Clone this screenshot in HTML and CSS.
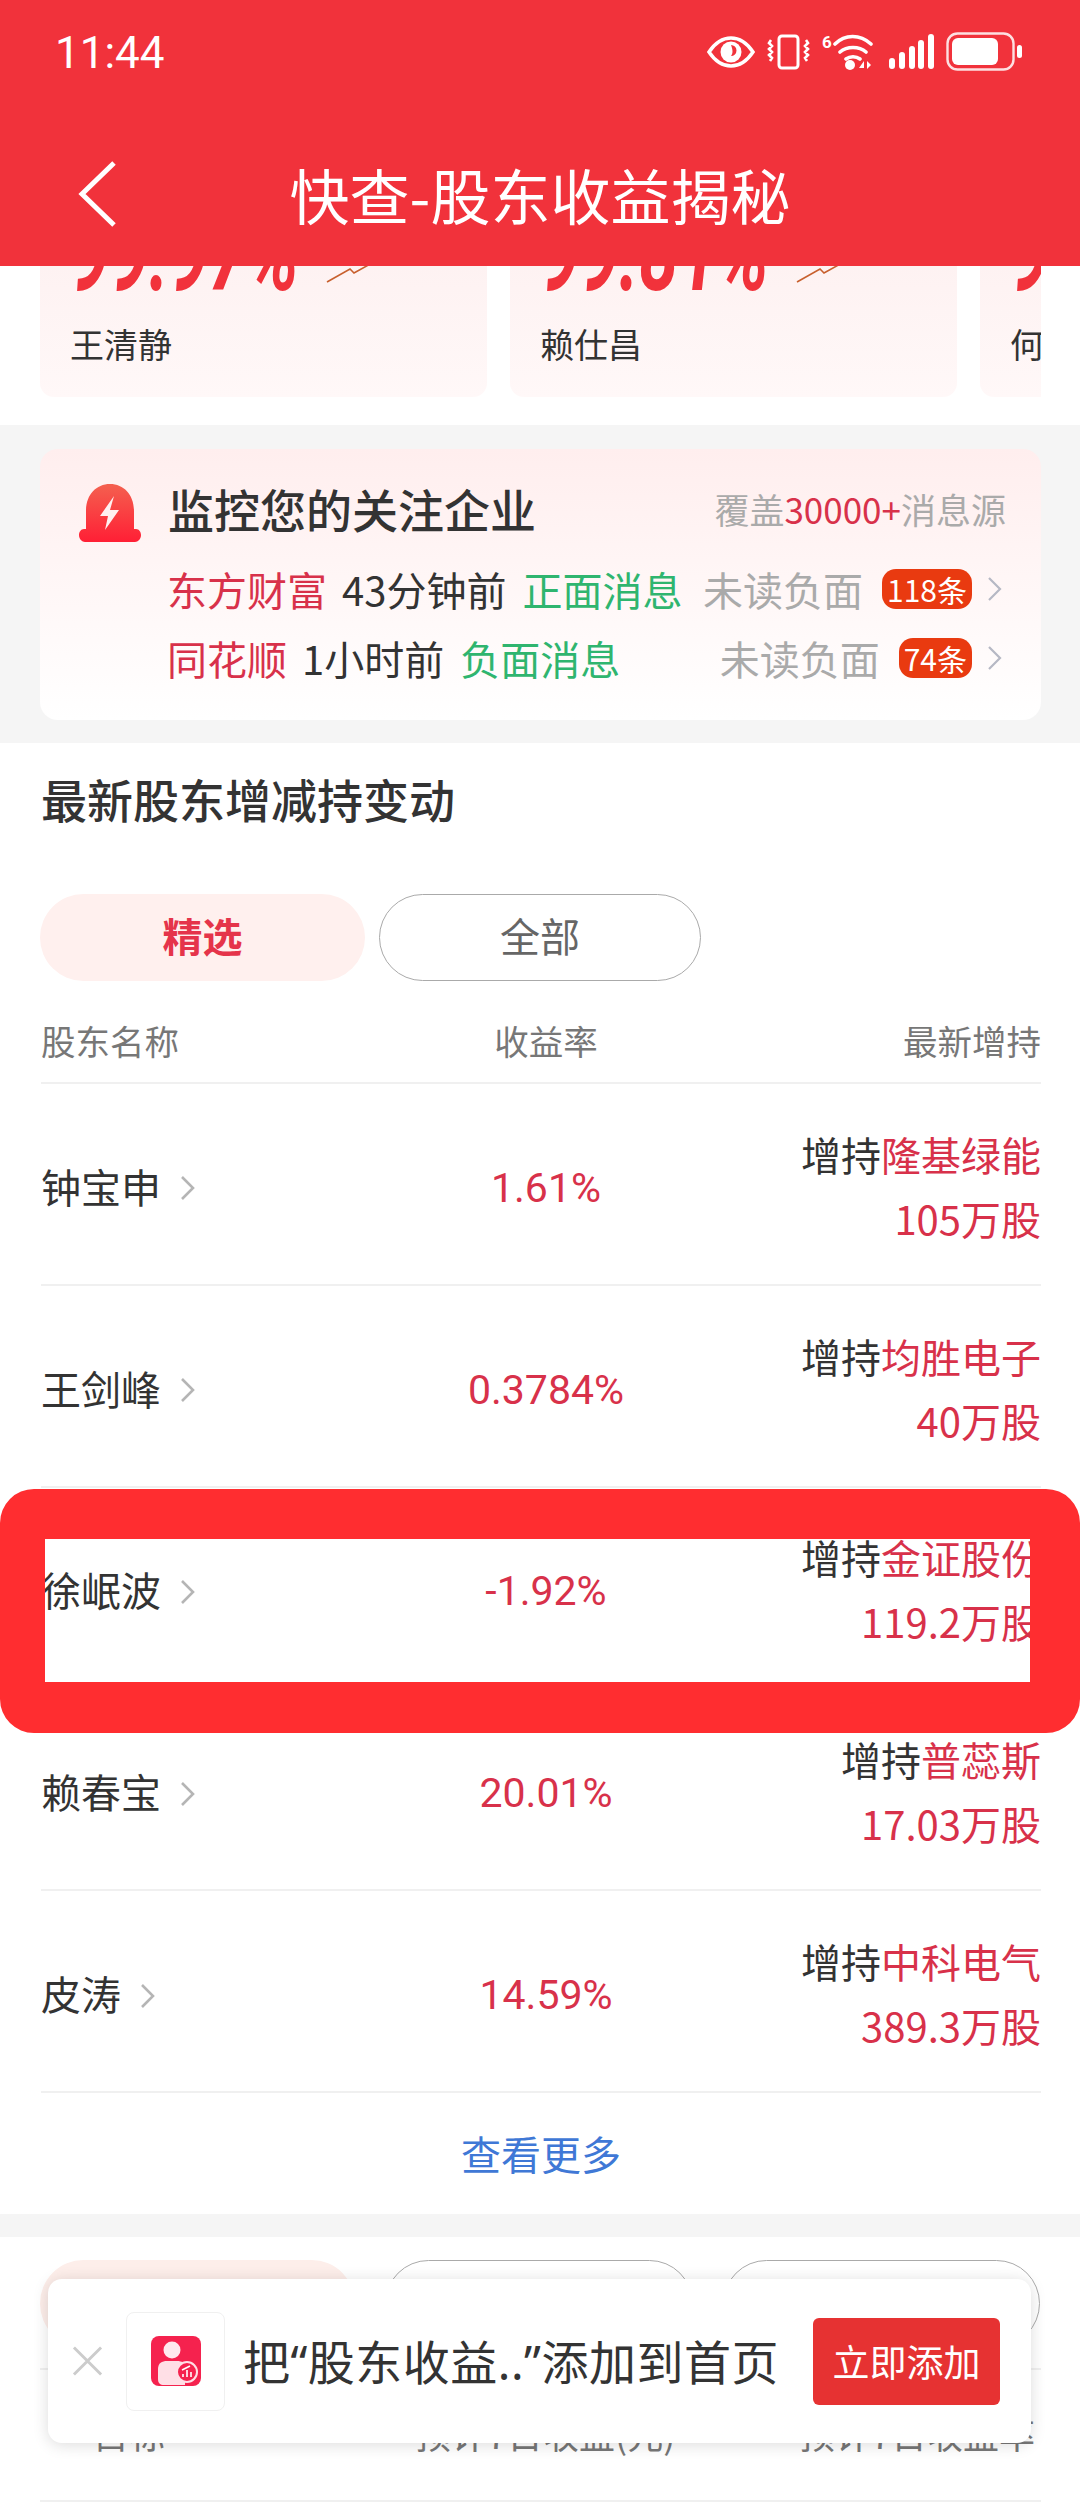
FILE: index.html
```html
<!DOCTYPE html>
<html lang="zh-CN">
<head>
<meta charset="utf-8">
<title>快查-股东收益揭秘</title>
<link rel="stylesheet" href="styles.css">
</head>
<body>
<div class="page">
  <header class="appbar">
    <div class="status">
      <span class="time">11:44</span>
      <div class="status-icons">
        <svg width="48" height="32" viewBox="0 0 48 32"><path d="M2 16C8 7 15 2 24 2s16 5 22 14c-6 9-13 14-22 14S8 25 2 16z" fill="none" stroke="#fff" stroke-width="3.5"/><circle cx="24" cy="16" r="10.5" fill="#fff"/><path d="M24 9a5.5 5.5 0 0 1 0 11c2.5-3 1.5-7 0-11z" fill="#f1323b"/></svg>
        <svg width="43" height="36" viewBox="0 0 43 36"><rect x="12" y="2" width="19" height="32" rx="3" fill="none" stroke="#fff" stroke-width="3"/><path d="M4 6L2 9l3 3-3 3 3 3-3 3 3 3-2 3M39 6l2 3-3 3 3 3-3 3 3 3-3 3 2 3" fill="none" stroke="#fff" stroke-width="2.6"/></svg>
        <svg class="wifi" width="51" height="36" viewBox="0 0 51 36"><text x="0" y="14" class="wifi-six">6</text><path d="M13 10C23 0 38 0 49 10M18 18c7-6 19-6 26 0M24 25c4-3 10-3 14 0" fill="none" stroke="#fff" stroke-width="3.6" stroke-linecap="round"/><circle cx="28" cy="31" r="5" fill="#fff"/><path d="M37 34h5v-7zM45 27v8l4-4z" fill="#fff"/></svg>
        <svg class="signal" width="45" height="35" viewBox="0 0 45 35"><rect x="0" y="24" width="6" height="11" rx="3"/><rect x="10" y="18" width="6" height="17" rx="3"/><rect x="20" y="12" width="6" height="23" rx="3"/><rect x="29" y="6" width="6" height="29" rx="3"/><rect x="39" y="0" width="6" height="35" rx="3"/></svg>
        <svg width="76" height="39" viewBox="0 0 76 39"><rect x="1.5" y="1.5" width="66" height="36" rx="10" fill="none" stroke="#fff" stroke-width="2.4" opacity=".85"/><rect x="6" y="6" width="46" height="27" rx="6" fill="#fff"/><rect x="71" y="13" width="5" height="13" rx="2.5" fill="#fff"/></svg>
      </div>
    </div>
    <div class="nav">
      <svg class="back" width="40" height="66" viewBox="0 0 40 66"><path d="M36 2L4 33l32 31" fill="none" stroke="#fff" stroke-width="5"/></svg>
      <h1 class="title">快查-股东收益揭秘</h1>
    </div>
  </header>

  <section class="top-cards">
    <div class="card-row">
      <article class="rank-card">
        <div class="rank-head"><span class="rank-num">99.97%</span><svg class="spark" width="46" height="34" viewBox="0 0 46 34"><path d="M1 33l23-13 4 4 18-10" fill="none" stroke="#c8602e" stroke-width="1.6"/></svg></div>
        <div class="rank-name">王清静</div>
      </article>
      <article class="rank-card">
        <div class="rank-head"><span class="rank-num">99.81%</span><svg class="spark" width="46" height="34" viewBox="0 0 46 34"><path d="M1 33l23-13 4 4 18-10" fill="none" stroke="#c8602e" stroke-width="1.6"/></svg></div>
        <div class="rank-name">赖仕昌</div>
      </article>
      <article class="rank-card">
        <div class="rank-head"><span class="rank-num">99.80%</span></div>
        <div class="rank-name">何雪萍</div>
      </article>
    </div>
  </section>

  <section class="band">
    <div class="monitor">
      <div class="monitor-head">
        <svg class="bell" width="62" height="60" viewBox="0 0 62 60"><defs><linearGradient id="bellfill" x1="0" y1="0" x2="0" y2="1"><stop offset="0" stop-color="#f4604f"/><stop offset="1" stop-color="#ff1f35"/></linearGradient></defs><path d="M7 46V28C7 12 17 1 31 1s24 11 24 27v18h2c3 0 5 3 5 6 0 4-3 7-6 7H6c-3 0-6-3-6-7 0-3 2-6 5-6z" fill="url(#bellfill)"/><path d="M35 13L21 33h8l-3 14 14-20h-9z" fill="#fff" opacity=".92"/></svg>
        <h2 class="monitor-title">监控您的关注企业</h2>
        <span class="monitor-src">覆盖<em>30000+</em>消息源</span>
      </div>
      <div class="feed">
        <span class="feed-co">东方财富</span><span class="feed-time">43分钟前</span><span class="feed-pos">正面消息</span>
        <span class="feed-unread">未读负面</span><span class="feed-badge">118条</span>
        <svg class="chev-sm" width="16" height="24" viewBox="0 0 16 24"><path d="M2 1l11 11L2 23" fill="none" stroke="#b6b8c4" stroke-width="2.2"/></svg>
      </div>
      <div class="feed">
        <span class="feed-co">同花顺</span><span class="feed-time">1小时前</span><span class="feed-pos">负面消息</span>
        <span class="feed-unread">未读负面</span><span class="feed-badge">74条</span>
        <svg class="chev-sm" width="16" height="24" viewBox="0 0 16 24"><path d="M2 1l11 11L2 23" fill="none" stroke="#b6b8c4" stroke-width="2.2"/></svg>
      </div>
    </div>
  </section>

  <section class="holders">
    <h2 class="section-title">最新股东增减持变动</h2>
    <div class="tabs">
      <span class="tab tab-on">精选</span>
      <span class="tab">全部</span>
    </div>
    <div class="thead">
      <span>股东名称</span><span class="c">收益率</span><span class="r">最新增持</span>
    </div>
    <div class="trow">
      <div class="name">钟宝申<svg class="chev" width="18" height="26" viewBox="0 0 18 26"><path d="M3 2l11 11L3 24" fill="none" stroke="#b5b5b5" stroke-width="2.6"/></svg></div>
      <div class="rate">1.61%</div>
      <div class="act"><div>增持<span class="red">隆基绿能</span></div><div class="red">105万股</div></div>
    </div>
    <div class="trow">
      <div class="name">王剑峰<svg class="chev" width="18" height="26" viewBox="0 0 18 26"><path d="M3 2l11 11L3 24" fill="none" stroke="#b5b5b5" stroke-width="2.6"/></svg></div>
      <div class="rate">0.3784%</div>
      <div class="act"><div>增持<span class="red">均胜电子</span></div><div class="red">40万股</div></div>
    </div>
    <div class="trow">
      <div class="name">徐岷波<svg class="chev" width="18" height="26" viewBox="0 0 18 26"><path d="M3 2l11 11L3 24" fill="none" stroke="#b5b5b5" stroke-width="2.6"/></svg></div>
      <div class="rate">-1.92%</div>
      <div class="act"><div>增持<span class="red">金证股份</span></div><div class="red">119.2万股</div></div>
    </div>
    <div class="trow">
      <div class="name">赖春宝<svg class="chev" width="18" height="26" viewBox="0 0 18 26"><path d="M3 2l11 11L3 24" fill="none" stroke="#b5b5b5" stroke-width="2.6"/></svg></div>
      <div class="rate">20.01%</div>
      <div class="act"><div>增持<span class="red">普蕊斯</span></div><div class="red">17.03万股</div></div>
    </div>
    <div class="trow">
      <div class="name">皮涛<svg class="chev" width="18" height="26" viewBox="0 0 18 26"><path d="M3 2l11 11L3 24" fill="none" stroke="#b5b5b5" stroke-width="2.6"/></svg></div>
      <div class="rate">14.59%</div>
      <div class="act"><div>增持<span class="red">中科电气</span></div><div class="red">389.3万股</div></div>
    </div>
    <div class="more">查看更多</div>
  </section>

  <div class="gap"></div>

  <section class="next">
    <div class="next-tabs">
      <span class="ntab ntab-on"></span><span class="ntab"></span><span class="ntab"></span>
    </div>
    <div class="next-head">
      <span>目标</span><span>预计7日收益(元)</span><span>预计7日收益率</span>
    </div>
  </section>

  <div class="frame"></div>

  <aside class="add-bar">
    <svg class="close" width="32" height="32" viewBox="0 0 32 32"><path d="M2 2l28 28M30 2L2 30" stroke="#ccc" stroke-width="3"/></svg>
    <div class="app-box">
      <svg width="50" height="50" viewBox="0 0 50 50"><rect width="50" height="50" rx="8" fill="#f5224e"/><circle cx="21" cy="14" r="8.5" fill="#ffe9ee"/><path d="M7 43V33c0-6 4-8 9-8h10c5 0 8 2 8 6v18H13c-4 0-6-2-6-6z" fill="#ffdfe6"/><circle cx="36" cy="36" r="10" fill="#f5224e" stroke="#ffdfe6" stroke-width="2"/><path d="M32 41v-3M36 41v-7M40 41v-5M31 34l8-4" stroke="#fff" stroke-width="1.6" fill="none"/></svg>
    </div>
    <span class="add-text">把“股东收益..”添加到首页</span>
    <span class="add-btn">立即添加</span>
  </aside>
</div>
</body>
</html>
```

FILE: styles.css
```css
* { box-sizing: border-box; }
html, body { margin: 0; padding: 0; background: #fff; }
body { font-family: "Noto Sans CJK SC", "Noto Sans", sans-serif; color: #333; }
h1, h2 { margin: 0; font-weight: 500; }
em { font-style: normal; }
.page { position: relative; width: 1080px; height: 2504px; overflow: hidden; background: #fff; }

.appbar { height: 266px; background: #f1323b; color: #fff; position: relative; z-index: 2; }
.status { height: 134px; padding: 28px 58px 0 55px; display: flex; justify-content: space-between; align-items: flex-start; }
.time { font-family: Roboto, sans-serif; font-size: 44px; line-height: 50px; }
.status-icons { display: flex; align-items: center; gap: 12px; margin-top: 4px; }
.wifi-six { font-family: Roboto, sans-serif; font-size: 17px; font-weight: 700; fill: #fff; }
.signal { fill: #fff; margin-left: 4px; }
.nav { height: 120px; position: relative; display: flex; justify-content: center; align-items: center; }
.back { position: absolute; left: 78px; top: 27px; }
.title { font-size: 60px; font-weight: 400; line-height: 80px; }

.top-cards { height: 159px; overflow: hidden; padding: 0 39px 0 40px; }
.card-row { display: flex; gap: 23px; margin-top: -86px; overflow: hidden; }
.rank-card { flex: 0 0 447px; height: 217px; padding: 40px 0 0 30px; border-radius: 14px; background: linear-gradient(#fdeeee, #fff8f8); }
.rank-head { display: flex; align-items: flex-end; height: 92px; }
.rank-num { display: inline-block; font-family: Roboto, sans-serif; font-size: 71px; line-height: 92px; font-weight: 700; font-style: italic; color: #f1323b; transform: scaleY(1.5); transform-origin: 0 70px; }
.spark { margin: 0 0 29px 27px; flex: none; }
.rank-name { font-size: 34px; line-height: 44px; margin-top: 10px; color: #333; white-space: nowrap; }

.band { height: 318px; background: #f5f5f5; padding: 24px 39px 23px 40px; }
.monitor { height: 271px; border-radius: 18px; background: linear-gradient(#ffeeee, #fff); padding: 34px 38px 0 39px; }
.monitor-head { display: flex; align-items: flex-start; height: 60px; margin-bottom: 11px; }
.bell { flex: none; margin-right: 27px; }
.monitor-title { font-size: 46px; line-height: 50px; color: #333; }
.monitor-src { margin-left: auto; margin-right: -3px; font-size: 35px; line-height: 52px; color: #aaa; }
.monitor-src em { color: #d8314a; }
.feed { display: flex; align-items: center; height: 69px; padding-left: 88px; font-size: 40px; white-space: nowrap; }
.feed-co { color: #d8314a; margin-right: 15px; }
.feed-time { color: #333; margin-right: 16px; }
.feed-pos { color: #2fb56f; }
.feed-unread { margin-left: auto; color: #aaa; }
.feed-badge { height: 40px; line-height: 40px; padding: 0 5px; margin-left: 19px; border-radius: 14px; background: #e93a10; color: #fff; font-size: 30px; }
.chev-sm { flex: none; margin-left: 15px; }

.holders { padding: 0 39px 0 41px; height: 1471px; }
.section-title { font-size: 46px; line-height: 60px; padding-top: 25px; height: 90px; color: #333; }
.tabs { display: flex; gap: 14px; margin-top: 61px; }
.tab { width: 322px; height: 87px; padding-bottom: 6px; border-radius: 44px; border: 1.5px solid #aaa; display: flex; align-items: center; justify-content: center; font-size: 40px; color: #666; }
.tab-on { width: 325px; border: 0; background: #fff0ee; color: #e5344a; font-weight: 700; margin-left: -1px; }
.thead { display: grid; grid-template-columns: 340px 330px 330px; align-items: center; height: 103px; padding-top: 16px; border-bottom: 2px solid #f0f0f0; font-size: 34.5px; color: #777; }
.c { text-align: center; }
.r { text-align: right; }
.trow { display: grid; grid-template-columns: 340px 330px 330px; align-items: center; height: 201.8px; padding-top: 4px; border-bottom: 2px solid #f0f0f0; font-size: 40px; }
.name { display: flex; align-items: center; color: #333; }
.chev { margin: 5px 0 0 18px; }
.rate { text-align: center; color: #d8314a; font-family: Roboto, sans-serif; font-size: 41px; padding-top: 4px; }
.act { text-align: right; line-height: 64px; color: #333; }
.red { color: #d8314a; }
.more { text-align: center; font-size: 40px; color: #3f78d6; line-height: 60px; margin-top: 30px; }

.gap { height: 23px; background: #f5f5f5; }
.next { padding: 0 39px 0 40px; }
.next-tabs { display: grid; grid-template-columns: 315px 308px 317px; gap: 30px; height: 133px; padding-top: 23px; border-bottom: 2px solid #f0f0f0; }
.ntab { height: 87px; border-radius: 44px; border: 1.5px solid #aaa; }
.ntab-on { border: 0; background: #fdeeea; }
.next-head { display: grid; grid-template-columns: 322px 384px 1fr; height: 132px; padding: 41px 0 0 53px; font-size: 36px; line-height: 44px; color: #777; border-bottom: 2px solid #f0f0f0; white-space: nowrap; overflow: hidden; }

.frame { position: absolute; left: 0; top: 1489px; width: 1080px; height: 244px; border-style: solid; border-color: #ff2d30; border-width: 50px 50px 51px 45px; border-radius: 34px; }

.add-bar { position: absolute; left: 48px; top: 2279px; width: 983px; height: 164px; border-radius: 14px; background: #fff; box-shadow: 0 2px 16px rgba(0,0,0,.14); display: flex; align-items: center; padding: 0 31px 0 24px; }
.close { flex: none; width: 31px; margin-right: 23px; }
.app-box { flex: none; width: 99px; height: 99px; border: 1.5px solid #f0f0f0; border-radius: 8px; display: flex; align-items: center; justify-content: center; }
.add-text { font-family: "Noto Sans", "Noto Sans CJK SC", sans-serif; font-size: 47px; letter-spacing: .5px; padding-bottom: 4px; color: #333; margin-left: 18px; white-space: nowrap; }
.add-btn { margin-left: auto; width: 187px; height: 87px; border-radius: 6px; background: #e63232; color: #fff; font-size: 37px; display: flex; align-items: center; justify-content: center; }
```
